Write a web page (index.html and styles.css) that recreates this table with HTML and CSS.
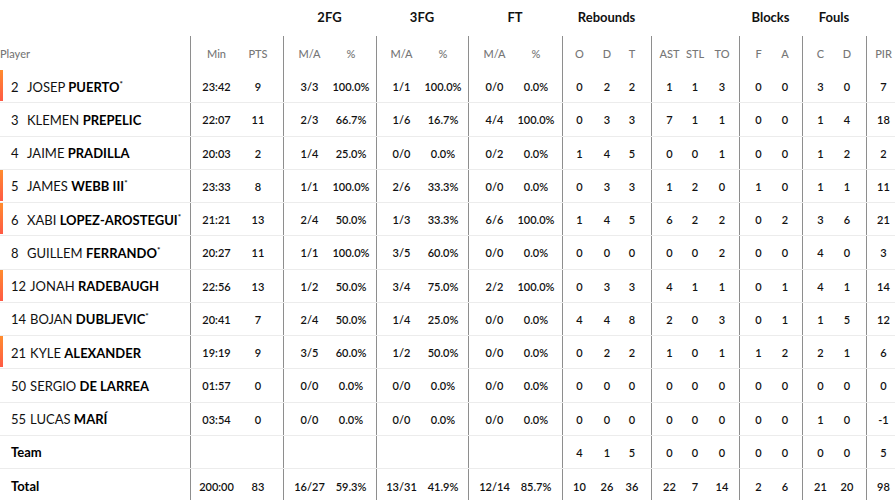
FILE: index.html
```html
<!DOCTYPE html>
<html lang="en">
<head>
<meta charset="utf-8">
<title>Box score</title>
<link rel="stylesheet" href="styles.css">
</head>
<body>
<div class="box">
  <div class="row groups">
    <div class="g" style="grid-column: 4 / span 2">2FG</div>
    <div class="g" style="grid-column: 6 / span 2">3FG</div>
    <div class="g" style="grid-column: 8 / span 2">FT</div>
    <div class="g" style="grid-column: 10 / span 3">Rebounds</div>
    <div class="g" style="grid-column: 16 / span 2">Blocks</div>
    <div class="g" style="grid-column: 18 / span 2">Fouls</div>
  </div>
  <div class="row sub">
    <div class="c player">Player</div>
    <div class="c s">Min</div><div class="c pts">PTS</div>
    <div class="c s">M/A</div><div class="c p2">%</div>
    <div class="c s">M/A</div><div class="c p3">%</div>
    <div class="c s">M/A</div><div class="c pf">%</div>
    <div class="c s">O</div><div class="c">D</div><div class="c rt">T</div>
    <div class="c s ast">AST</div><div class="c">STL</div><div class="c to">TO</div>
    <div class="c s">F</div><div class="c ba">A</div>
    <div class="c s">C</div><div class="c fd">D</div>
    <div class="c s">PIR</div>
  </div>
  <div id="rows"></div>
</div>
<script src="app.js"></script>
</body>
</html>
```
FILE: styles.css
```css
* { box-sizing: border-box; }
html, body { margin: 0; padding: 0; background: #fff; overflow: hidden; }
body { font-family: Lato, "Open Sans", sans-serif; color: #111; }
.box { width: 900px; }
.row {
  display: grid;
  grid-template-columns: 190px 52px 41px 52px 41px 50px 42px 52px 42px 34px 22px 33px 32px 24px 32px 38px 25px 36px 28px 34px;
}
.groups { height: 36px; align-items: center; }
.g { text-align: center; font-weight: 700; font-size: 13px; color: #111; padding-bottom: 2px; }
.sub { height: 34px; }
.sub .c { font-size: 11px; color: #777; font-weight: 500; }
.c {
  display: flex; align-items: center; justify-content: center;
  font-size: 11px; font-weight: 600; color: #111; white-space: nowrap;
}
.s { border-left: 1px solid #8e8e8e; }
.pts { padding-right: 9px; }
.p2 { padding-right: 9px; }
.p3 { padding-right: 8px; }
.pf { padding-right: 10px; }
.rt { padding-right: 5px; }
.ast { padding-left: 4px; }
.to { padding-right: 2px; }
.ba { padding-right: 9px; }
.fd { padding-right: 10px; }
.data { height: 33.25px; border-bottom: 1px solid #ececec; }
.data .c { padding-top: 1px; }
.data.last { border-bottom: 0; }
.player { justify-content: flex-start; }
.sub .player { padding-left: 0; }
.data .player { padding-left: 11px; position: relative; font-size: 13px; font-weight: 400; }
.data .player.bold { font-weight: 700; color: #000; }
.num { min-width: 12px; margin-right: 4px; color: #111; }
.first { color: #111; }
.last-name { font-weight: 700; color: #000; }
.star { font-size: 8px; font-weight: 700; position: relative; top: -3px; }
.starter::before {
  content: ""; position: absolute; left: 0; top: 0; bottom: 1px; width: 3px;
  background: linear-gradient(#ff8c2e, #ff5a45);
}
```
FILE: app.js
```js
const players = [
  [1,"2","JOSEP","PUERTO",1,"23:42","9","3/3","100.0%","1/1","100.0%","0/0","0.0%","0","2","2","1","1","3","0","0","3","0","7"],
  [0,"3","KLEMEN","PREPELIC",0,"22:07","11","2/3","66.7%","1/6","16.7%","4/4","100.0%","0","3","3","7","1","1","0","0","1","4","18"],
  [0,"4","JAIME","PRADILLA",0,"20:03","2","1/4","25.0%","0/0","0.0%","0/2","0.0%","1","4","5","0","0","1","0","0","1","2","2"],
  [1,"5","JAMES","WEBB III",1,"23:33","8","1/1","100.0%","2/6","33.3%","0/0","0.0%","0","3","3","1","2","0","1","0","1","1","11"],
  [1,"6","XABI","LOPEZ-AROSTEGUI",1,"21:21","13","2/4","50.0%","1/3","33.3%","6/6","100.0%","1","4","5","6","2","2","0","2","3","6","21"],
  [0,"8","GUILLEM","FERRANDO",1,"20:27","11","1/1","100.0%","3/5","60.0%","0/0","0.0%","0","0","0","0","0","2","0","0","4","0","3"],
  [1,"12","JONAH","RADEBAUGH",0,"22:56","13","1/2","50.0%","3/4","75.0%","2/2","100.0%","0","3","3","4","1","1","0","1","4","1","14"],
  [0,"14","BOJAN","DUBLJEVIC",1,"20:41","7","2/4","50.0%","1/4","25.0%","0/0","0.0%","4","4","8","2","0","3","0","1","1","5","12"],
  [1,"21","KYLE","ALEXANDER",0,"19:19","9","3/5","60.0%","1/2","50.0%","0/0","0.0%","0","2","2","1","0","1","1","2","2","1","6"],
  [0,"50","SERGIO","DE LARREA",0,"01:57","0","0/0","0.0%","0/0","0.0%","0/0","0.0%","0","0","0","0","0","0","0","0","0","0","0"],
  [0,"55","LUCAS","MARÍ",0,"03:54","0","0/0","0.0%","0/0","0.0%","0/0","0.0%","0","0","0","0","0","0","0","0","1","0","-1"]
];
const cls = ["s","pts","s","p2","s","p3","s","pf","s","","rt","s ast","","to","s","ba","s","fd","s"];
function cells(vals) {
  return vals.map((v, i) => `<div class="c ${cls[i]}">${v}</div>`).join("");
}
let html = "";
for (const p of players) {
  const [starter, num, first, last, star, ...vals] = p;
  html += `<div class="row data"><div class="c player${starter ? " starter" : ""}"><span class="num">${num}</span><span class="first">${first}&nbsp;</span><span class="last-name">${last}</span>${star ? '<span class="star">*</span>' : ""}</div>${cells(vals)}</div>`;
}
html += `<div class="row data"><div class="c player bold">Team</div>${cells(["","","","","","","","","4","1","5","0","0","0","0","0","0","0","5"])}</div>`;
html += `<div class="row data last"><div class="c player bold">Total</div>${cells(["200:00","83","16/27","59.3%","13/31","41.9%","12/14","85.7%","10","26","36","22","7","14","2","6","21","20","98"])}</div>`;
document.getElementById("rows").innerHTML = html;
```
